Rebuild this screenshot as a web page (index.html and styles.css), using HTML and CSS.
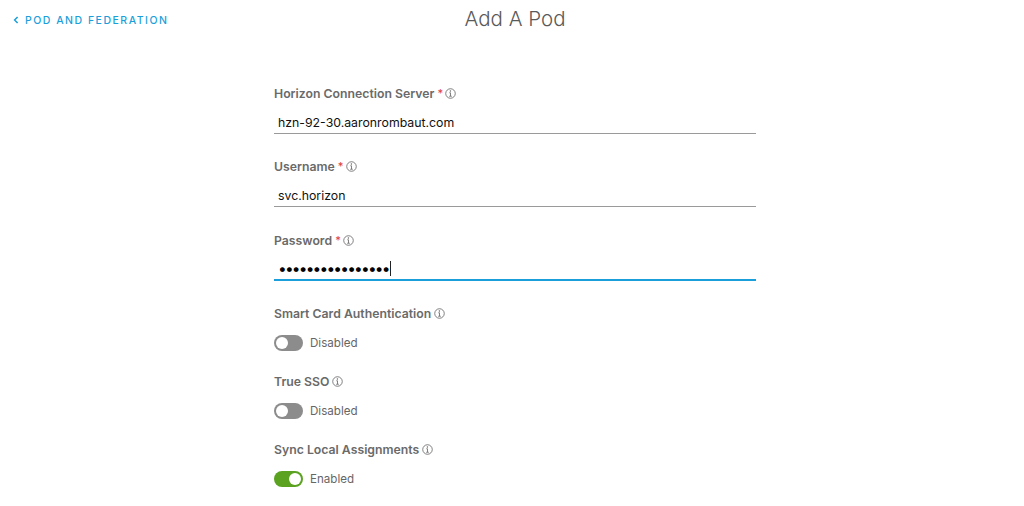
FILE: index.html
```html
<!DOCTYPE html>
<html lang="en">
<head>
<meta charset="utf-8">
<title>Add A Pod</title>
<link rel="stylesheet" href="styles.css">
</head>
<body>
<header class="top">
  <a class="back" href="#">
    <svg class="chev" width="6" height="8" viewBox="0 0 6 8"><path d="M4.6 1 1.6 4l3 3" fill="none" stroke="#1a9fdb" stroke-width="1.5"/></svg>
    <span>POD AND FEDERATION</span>
  </a>
  <h1 class="title">Add A Pod</h1>
</header>
<main class="form">
  <div class="field">
    <div class="label">Horizon Connection Server <span class="req">*</span><svg class="info" viewBox="0 0 12 12"><circle cx="6" cy="6" r="5.2"/><path d="M6 5.2v3.6M4.6 9h2.8M4.7 5.2H6"/><circle class="dot" cx="5.9" cy="3.3" r=".8"/></svg></div>
    <div class="input">hzn-92-30.aaronrombaut.com</div>
  </div>
  <div class="field">
    <div class="label">Username <span class="req">*</span><svg class="info" viewBox="0 0 12 12"><circle cx="6" cy="6" r="5.2"/><path d="M6 5.2v3.6M4.6 9h2.8M4.7 5.2H6"/><circle class="dot" cx="5.9" cy="3.3" r=".8"/></svg></div>
    <div class="input">svc.horizon</div>
  </div>
  <div class="field">
    <div class="label">Password <span class="req">*</span><svg class="info" viewBox="0 0 12 12"><circle cx="6" cy="6" r="5.2"/><path d="M6 5.2v3.6M4.6 9h2.8M4.7 5.2H6"/><circle class="dot" cx="5.9" cy="3.3" r=".8"/></svg></div>
    <div class="input focus"><span class="dots">••••••••••••••••</span><span class="caret"></span></div>
  </div>
  <div class="toggle-field">
    <div class="label">Smart Card Authentication<svg class="info" viewBox="0 0 12 12"><circle cx="6" cy="6" r="5.2"/><path d="M6 5.2v3.6M4.6 9h2.8M4.7 5.2H6"/><circle class="dot" cx="5.9" cy="3.3" r=".8"/></svg></div>
    <div class="toggle-row"><span class="switch"><span class="knob"></span></span><span class="state">Disabled</span></div>
  </div>
  <div class="toggle-field">
    <div class="label">True SSO<svg class="info" viewBox="0 0 12 12"><circle cx="6" cy="6" r="5.2"/><path d="M6 5.2v3.6M4.6 9h2.8M4.7 5.2H6"/><circle class="dot" cx="5.9" cy="3.3" r=".8"/></svg></div>
    <div class="toggle-row"><span class="switch"><span class="knob"></span></span><span class="state">Disabled</span></div>
  </div>
  <div class="toggle-field">
    <div class="label">Sync Local Assignments<svg class="info" viewBox="0 0 12 12"><circle cx="6" cy="6" r="5.2"/><path d="M6 5.2v3.6M4.6 9h2.8M4.7 5.2H6"/><circle class="dot" cx="5.9" cy="3.3" r=".8"/></svg></div>
    <div class="toggle-row"><span class="switch on"><span class="knob"></span></span><span class="state">Enabled</span></div>
  </div>
</main>
</body>
</html>
```
FILE: styles.css
```css
* { box-sizing: border-box; }
html, body { margin: 0; height: 506px; overflow: hidden; background: #fff; }
body { font-family: "Inter", "Noto Sans", sans-serif; color: #565656; }
.top { display: grid; grid-template-columns: 1fr 1fr; height: 85px; padding-left: 13px; }
.back { display: flex; align-items: center; gap: 6px; height: 14px; margin-top: 13px; color: #1a9fdb; text-decoration: none; font-size: 10.5px; font-weight: 500; letter-spacing: 1.5px; white-space: nowrap; }
.chev { flex: none; }
.title { position: absolute; left: 315px; width: 400px; top: 7px; margin: 0; text-align: center; font-size: 20.5px; line-height: 24px; font-weight: 300; color: #5a5a5a; }
.form { width: 482px; margin-left: 274px; }
.field { height: 73px; }
.field:nth-child(2) { height: 74px; }
.field:nth-child(3) { height: 73.5px; }
.label { display: flex; align-items: center; height: 16px; font-size: 12.25px; font-weight: 600; color: #6a6a6a; white-space: pre; }
.req { color: #e0433a; font-size: 11px; font-weight: 500; }
.info { width: 11px; height: 11px; margin-left: 2px; fill: none; stroke: #666; stroke-width: .9; }
.toggle-field .info { margin-left: 3px; }
.info .dot { fill: #666; stroke: none; }
.input { display: flex; align-items: center; height: 25px; margin-top: 8px; padding: 2px 0 0 4px; border-bottom: 1px solid #9a9a9a; font-size: 12.3px; color: #111; }
.input.focus { height: 26px; margin-top: 7px; padding-top: 3px; border-bottom: 2px solid #1a9fdb; }
.dots { letter-spacing: -1.8px; font-size: 15.5px; color: #000; line-height: 1; }
.caret { width: 1px; height: 15px; margin-left: 1.5px; background: #222; }
.toggle-field { height: 68px; }
.toggle-row { display: flex; align-items: center; gap: 7px; margin-top: 13px; height: 16px; }
.switch { display: flex; align-items: center; width: 29px; height: 16px; padding: 2px; border-radius: 8px; background: #8c8c8c; }
.knob { width: 12px; height: 12px; border-radius: 50%; background: #fff; }
.switch.on { background: #5aa220; justify-content: flex-end; }
.state { font-size: 11.6px; color: #666; }
```
